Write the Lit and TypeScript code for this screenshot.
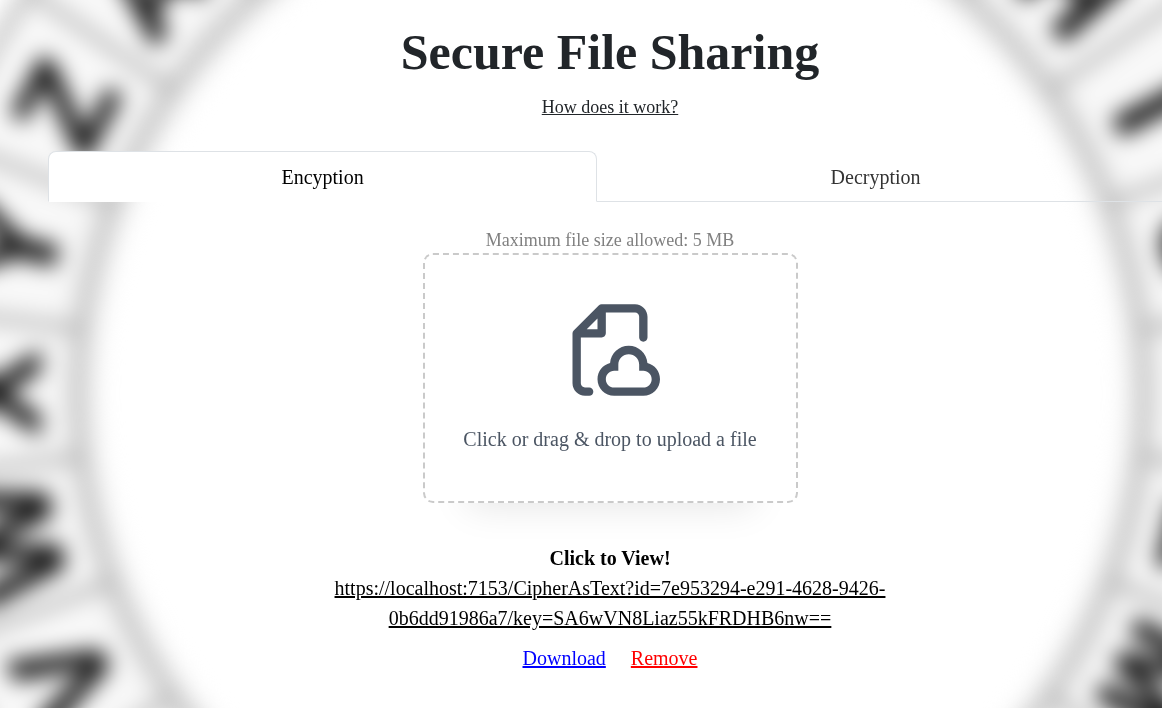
import { LitElement, html, css, svg, nothing } from "lit";
import { customElement, state } from "lit/decorators.js";

const CENTER_X = 611;
const CENTER_Y = 393;
const INNER_RADIUS = 533;
const OUTER_RADIUS = 706;
const STEP = 360 / 26;

// Cells outside this set lie wholly beyond the edges of the disk's view box.
const IN_VIEW = "AHIJLMVWXYZ";

@customElement("cipher-wheel")
class CipherWheel extends LitElement {
  static styles = css`
    :host { display: block; position: fixed; inset: 0; overflow: hidden; }
    svg { display: block; width: 100%; height: 100%; }
    .line { fill: none; stroke: #b4b4b4; stroke-width: 10px; }
    .cells { fill: none; stroke: #f8f8f8; stroke-width: 190px; }
    .haze { fill: none; stroke: #eeeeee; stroke-width: 40px; }
    .letter { font: bold 128px "Liberation Sans", Arial, sans-serif; text-anchor: middle; fill: #141414; stroke: #141414; stroke-width: 3px; }
  `;

  private cell(letter: string, index: number) {
    const turn = -90 + STEP * (3 + index);
    return svg`
      ${IN_VIEW.includes(letter)
        ? svg`<g transform="rotate(${turn} ${CENTER_X} ${CENTER_Y})">
            <text class="letter" x=${CENTER_X} y=${CENTER_Y - 572}>${letter}</text>
          </g>`
        : nothing}
      <g transform="rotate(${turn + STEP / 2} ${CENTER_X} ${CENTER_Y})">
        <path class="line" d="M${CENTER_X} ${CENTER_Y - INNER_RADIUS}V${CENTER_Y - OUTER_RADIUS}" />
      </g>`;
  }

  render() {
    return html`
      <svg viewBox="0 0 1162 708" preserveAspectRatio="xMidYMid slice" aria-hidden="true">
        <defs>
          <filter id="soft" filterUnits="userSpaceOnUse" x="-150" y="-150" width="1462" height="1008" color-interpolation-filters="sRGB">
            <feGaussianBlur stdDeviation="11" />
          </filter>
        </defs>
        <g filter="url(#soft)">
          <circle class="cells" cx=${CENTER_X} cy=${CENTER_Y} r=${INNER_RADIUS + 95} />
          <circle class="haze" cx=${CENTER_X} cy=${CENTER_Y} r=${INNER_RADIUS} />
          <circle class="line" cx=${CENTER_X} cy=${CENTER_Y} r=${INNER_RADIUS} />
          <circle class="line" cx=${CENTER_X} cy=${CENTER_Y} r=${OUTER_RADIUS} />
          ${[..."ABCDEFGHIJKLMNOPQRSTUVWXYZ"].map((l, i) => this.cell(l, i))}
        </g>
      </svg>`;
  }
}

@customElement("app-root")
class AppRoot extends LitElement {
  @state() private tab = "encrypt";

  static styles = css`
    :host {
      display: block;
      min-height: 100vh;
      font: 20px/30px "Liberation Serif", "Times New Roman", serif;
      color: #212529;
      background: #fff;
    }
    *, *::before, *::after { box-sizing: border-box; }
    main {
      position: relative;
      display: flex;
      flex-direction: column;
      align-items: center;
      padding: 22px 0 24px 58px;
    }
    h1 { margin: 0; font-size: 50px; line-height: 60px; font-weight: 700; }
    .how { margin-top: 10px; font-size: 18px; color: #212529; }
    .tabs {
      align-self: stretch;
      display: flex;
      margin: 29px 0 0 -10px;
      padding-right: 8px;
      border-bottom: 1px solid #dee2e6;
    }
    .tab {
      flex: 1 1 auto;
      margin: 0 0 -1px;
      padding: 10px 20px 9px;
      border: 1px solid transparent;
      border-radius: 8px 8px 0 0;
      background: none;
      font: inherit;
      color: #333;
      cursor: pointer;
    }
    .tab.active { border-color: #dee2e6 #dee2e6 #fff; background: #fff; color: #000; }
    .limit { margin: 25px 0 0; font-size: 18px; line-height: 26px; color: #808080; }
    .drop {
      display: flex;
      flex-direction: column;
      align-items: center;
      justify-content: center;
      gap: 24px;
      width: 375px;
      max-width: 100%;
      height: 250px;
      padding-bottom: 2px;
      border: 2px dashed #cacaca;
      border-radius: 10px;
      background: #fff;
      box-shadow: 0 48px 35px -44px rgba(0, 0, 0, 0.1);
      color: #4b5563;
      cursor: pointer;
    }
    .drop svg { width: 100px; height: 100px; fill: #4b5563; }
    .file { position: absolute; width: 1px; height: 1px; opacity: 0; }
    .title { margin: 40px 0 0; font-weight: 700; color: #000; }
    .result { width: 560px; max-width: 100%; color: #000; text-align: center; overflow-wrap: break-word; }
    .actions { display: flex; gap: 25px; margin-top: 10px; }
    .download { color: #00f; }
    .remove { color: #f00; }
  `;

  private tabButton(id: string, label: string) {
    const active = this.tab === id;
    return html`<button class="tab ${active ? "active" : ""}" role="tab" aria-selected=${active}
      @click=${() => (this.tab = id)}>${label}</button>`;
  }

  render() {
    return html`
      <cipher-wheel></cipher-wheel>
      <main>
        <h1>Secure File Sharing</h1>
        <a class="how" href="#how">How does it work?</a>
        <div class="tabs" role="tablist">
          ${this.tabButton("encrypt", "Encyption")}
          ${this.tabButton("decrypt", "Decryption")}
        </div>
        <p class="limit">Maximum file size allowed: 5 MB</p>
        <label class="drop" for="file">
          <svg viewBox="0 0 24 24" aria-hidden="true">
            <path fill-rule="evenodd" clip-rule="evenodd" d="M10 1C9.73478 1 9.48043 1.10536 9.29289 1.29289L3.29289 7.29289C3.10536 7.48043 3 7.73478 3 8V20C3 21.6569 4.34315 23 6 23H7C7.55228 23 8 22.5523 8 22C8 21.4477 7.55228 21 7 21H6C5.44772 21 5 20.5523 5 20V9H10C10.5523 9 11 8.55228 11 8V3H18C18.5523 3 19 3.44772 19 4V9C19 9.55228 19.4477 10 20 10C20.5523 10 21 9.55228 21 9V4C21 2.34315 19.6569 1 18 1H10ZM9 7H6.41421L9 4.41421V7ZM14 15.5C14 14.1193 15.1193 13 16.5 13C17.8807 13 19 14.1193 19 15.5V16V17H20C21.1046 17 22 17.8954 22 19C22 20.1046 21.1046 21 20 21H13C11.8954 21 11 20.1046 11 19C11 17.8954 11.8954 17 13 17H14V16V15.5ZM16.5 11C14.142 11 12.2076 12.8136 12.0156 15.122C10.2825 15.5606 9 17.1305 9 19C9 21.2091 10.7909 23 13 23H20C22.2091 23 24 21.2091 24 19C24 17.1305 22.7175 15.5606 20.9844 15.122C20.7924 12.8136 18.858 11 16.5 11Z" />
          </svg>
          <span>Click or drag &amp; drop to upload a file</span>
          <input class="file" id="file" type="file" />
        </label>
        <p class="title">Click to View!</p>
        <a class="result" href="#view">https://localhost:7153/CipherAsText?id=7e953294-e291-4628-9426-0b6dd91986a7/key=SA6wVN8Liaz55kFRDHB6nw==</a>
        <div class="actions">
          <a class="download" href="#download">Download</a>
          <a class="remove" href="#remove">Remove</a>
        </div>
      </main>`;
  }
}
